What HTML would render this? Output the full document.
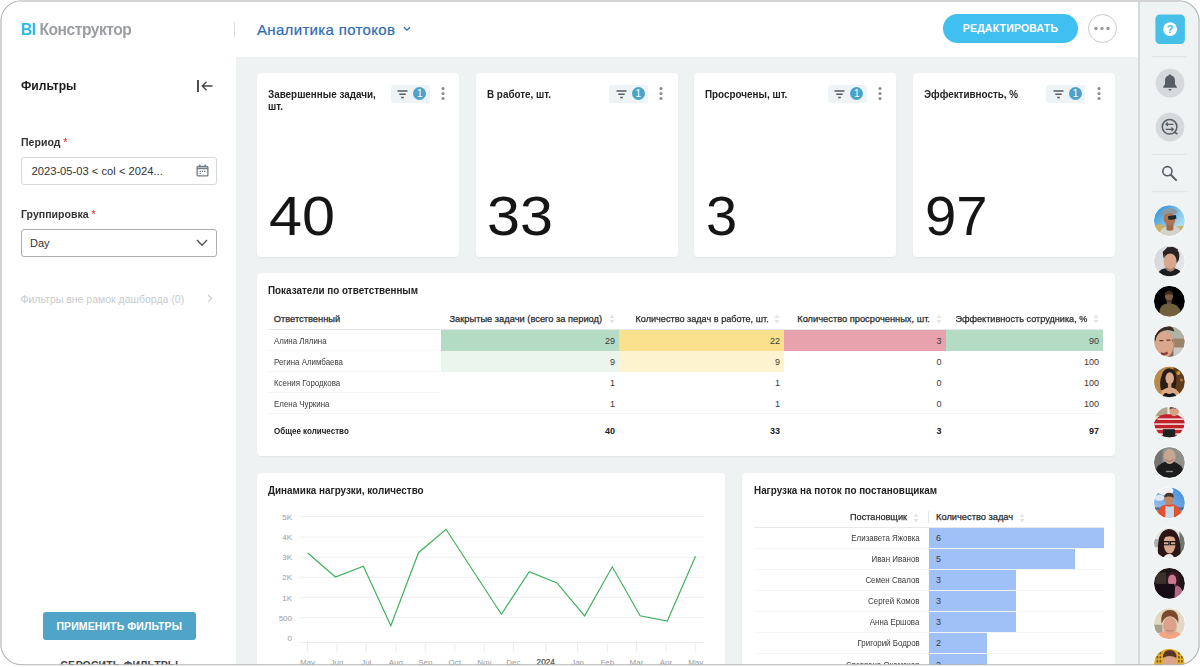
<!DOCTYPE html>
<html lang="ru">
<head>
<meta charset="utf-8">
<title>BI Конструктор — Аналитика потоков</title>
<style>
*{box-sizing:border-box;margin:0;padding:0}
html,body{width:1200px;height:667px;overflow:hidden;background:#fff}
body{font-family:"Liberation Sans",sans-serif;color:#222;position:relative}
.abs{position:absolute}
#frame{position:absolute;left:0;top:0;width:1200px;height:665.3px;border-radius:21px;overflow:hidden;background:#fff}
#frameborder{position:absolute;left:0;top:0;pointer-events:none;z-index:50}
#content{position:absolute;left:236px;top:57px;width:904px;height:620px;background:#eff2f3}
#rside{position:absolute;left:1138px;top:0;width:62px;height:667px;background:#f0f3f4;border-left:2px solid #d3dae0}
.card{position:absolute;background:#fff;border-radius:4px;box-shadow:0 1px 2px rgba(0,0,0,.06)}
.ct{position:absolute;left:11px;top:15px;font-size:10.5px;transform:scaleX(.94);transform-origin:0 0;line-height:12px;font-weight:bold;color:#222;white-space:nowrap}
.big{position:absolute;left:11.8px;font-size:56px;line-height:56px;color:#151515;transform:scaleX(1.06);transform-origin:0 0}
.chip{position:absolute;left:133.5px;top:11.5px;width:39px;height:18px;border-radius:3px;background:#eef3f6}
.dots3{position:absolute;top:14px;width:4px}
.lbl{position:absolute;left:20.5px;transform:scaleX(.96);transform-origin:0 0;font-size:11px;font-weight:bold;color:#333;white-space:nowrap}
.lbl i{color:#e02020;font-style:normal;font-weight:normal}
.ttl{position:absolute;font-size:10.5px;line-height:14px;font-weight:bold;color:#222;white-space:nowrap;transform:scaleX(.94);transform-origin:0 0}
.th{position:absolute;font-size:9.3px;line-height:13px;color:#2a2a2a;white-space:nowrap;-webkit-text-stroke:.25px #2a2a2a}
.td{position:absolute;font-size:9px;line-height:21px;color:#3a3a3a;white-space:nowrap}
.td.b{font-weight:bold;color:#222}
.r{text-align:right}
.th.r{transform:scaleX(.982);transform-origin:100% 0}
.td.n{transform:scaleX(.88);transform-origin:0 0}
.td.n2{transform:scaleX(.89);transform-origin:0 0}
.td.n3{transform:scaleX(.88);transform-origin:100% 0}
</style>
</head>
<body>
<div id="frame">

<!-- header -->
<div class="abs" style="left:21px;top:19px;font-size:16.2px;line-height:20px;font-weight:bold;letter-spacing:-0.5px;transform:scaleX(.965);transform-origin:0 0;white-space:nowrap;color:#9a9da1"><span style="color:#2db7ea">BI</span> Конструктор</div>
<div class="abs" style="left:234px;top:22px;width:1px;height:15px;background:#dcdfe1"></div>
<div class="abs" style="left:257px;top:20px;font-size:15px;letter-spacing:.33px;line-height:20px;color:#2a6bb3;white-space:nowrap;-webkit-text-stroke:.2px #2a6bb3">Аналитика потоков</div>
<svg class="abs" style="left:403px;top:26px" width="8" height="6" viewBox="0 0 8 6"><path d="M1 1.2 L4 4.2 L7 1.2" fill="none" stroke="#2a6bb3" stroke-width="1.3"/></svg>

<div class="abs" style="left:943px;top:14px;width:135px;height:29px;border-radius:15px;background:#3fc0f0;color:#fff;font-size:10.5px;font-weight:bold;line-height:29px;text-align:center;letter-spacing:.2px">РЕДАКТИРОВАТЬ</div>
<div class="abs" style="left:1087.5px;top:14.3px;width:29px;height:29px;border-radius:50%;border:1px solid #c9c9c9;background:#fff"></div>
<svg class="abs" style="left:1093px;top:26.3px" width="18" height="5" viewBox="0 0 18 5"><circle cx="3" cy="2.5" r="1.7" fill="#9a9a9a"/><circle cx="9" cy="2.5" r="1.7" fill="#9a9a9a"/><circle cx="15" cy="2.5" r="1.7" fill="#9a9a9a"/></svg>

<!-- left sidebar -->
<div class="abs" style="left:20.5px;top:77px;font-size:13px;line-height:18px;font-weight:bold;color:#1c1c1c;transform:scaleX(.93);transform-origin:0 0">Фильтры</div>
<svg class="abs" style="left:196px;top:79px" width="18" height="14" viewBox="0 0 18 14"><path d="M2 1 V13" stroke="#444" stroke-width="1.9" fill="none"/><path d="M16.5 7 H6.5 M10.5 2.8 L6.3 7 L10.5 11.2" stroke="#444" stroke-width="1.4" fill="none"/></svg>

<div class="lbl" style="top:136px;line-height:13px">Период <i>*</i></div>
<div class="abs" style="left:20.5px;top:157px;width:196px;height:27.5px;border:1px solid #d6d9db;border-radius:3px;background:#fff"></div>
<div class="abs" style="left:31.5px;top:164px;font-size:11.2px;line-height:14px;color:#333;white-space:nowrap">2023-05-03 &lt; col &lt; 2024...</div>
<svg class="abs" style="left:196px;top:164px" width="13" height="13" viewBox="0 0 13 13"><rect x="1.100" y="2.300" width="10.800" height="9.600" rx="1" fill="none" stroke="#727c85" stroke-width="1.300"/><path d="M1 4.300 H12" stroke="#727c85" stroke-width="1.800"/><path d="M3.800 0.600 V3 M9.200 0.600 V3" stroke="#727c85" stroke-width="1.300"/><path d="M3.600 7.300 H5 M5.900 7.300 H7.100 M8 7.300 H9.400 M3.600 9.500 H5" stroke="#727c85" stroke-width="1.200"/></svg>

<div class="lbl" style="top:208px;line-height:13px">Группировка <i>*</i></div>
<div class="abs" style="left:20.5px;top:228.8px;width:196px;height:28px;border:1px solid #aaaeb1;border-radius:3px;background:#fff"></div>
<div class="abs" style="left:30px;top:236px;font-size:11px;line-height:14px;color:#333">Day</div>
<svg class="abs" style="left:196px;top:239.300px" width="12" height="8" viewBox="0 0 12 8"><path d="M1 1 L6 6.2 L11 1" fill="none" stroke="#555" stroke-width="1.4"/></svg>

<div class="abs" style="left:20.5px;top:291.5px;font-size:10.5px;line-height:14px;color:#c7cccf;white-space:nowrap">Фильтры вне рамок дашборда (0)</div>
<svg class="abs" style="left:207px;top:294px" width="6" height="9" viewBox="0 0 6 9"><path d="M1 1 L4.6 4.5 L1 8" fill="none" stroke="#c7cccf" stroke-width="1.1"/></svg>

<div class="abs" style="left:42.5px;top:612px;width:153.5px;height:28px;border-radius:3px;background:#50a4c8;color:#fff;font-size:10.5px;font-weight:bold;line-height:28px;text-align:center;letter-spacing:.1px;white-space:nowrap">ПРИМЕНИТЬ ФИЛЬТРЫ</div>
<div class="abs" style="left:42.5px;top:655px;width:153.5px;font-size:10.5px;font-weight:bold;line-height:20px;text-align:center;color:#444;letter-spacing:.1px;white-space:nowrap">СБРОСИТЬ ФИЛЬТРЫ</div>

<!-- content -->
<div id="content"></div>

<!--CARDS-->
<div class="card" style="left:257.0px;top:73px;width:202px;height:183.5px">
<div class="ct">Завершенные задачи,<br>шт.</div>
<div class="chip"><svg class="abs" style="left:6.500px;top:5px" width="11" height="9" viewBox="0 0 11 9"><path d="M0.5 1 H10.5 M2.3 4.2 H8.7 M4.2 7.4 H6.8" stroke="#555b60" stroke-width="1.5" fill="none"/></svg><div class="abs" style="left:22.6px;top:2.4px;width:13.2px;height:13.2px;border-radius:50%;background:#4ba3c8;color:#fff;font-size:10px;line-height:13.5px;text-align:center">1</div></div>
<svg class="dots3" style="left:183.900px" width="4" height="13" viewBox="0 0 4 13"><circle cx="2" cy="1.6" r="1.5" fill="#8a8a8a"/><circle cx="2" cy="6.5" r="1.5" fill="#8a8a8a"/><circle cx="2" cy="11.4" r="1.5" fill="#8a8a8a"/></svg>
<div class="big" style="top:115px;transform:scaleX(1.06)">40</div>
</div>
<div class="card" style="left:475.6px;top:73px;width:202px;height:183.5px">
<div class="ct">В работе, шт.</div>
<div class="chip"><svg class="abs" style="left:6.500px;top:5px" width="11" height="9" viewBox="0 0 11 9"><path d="M0.5 1 H10.5 M2.3 4.2 H8.7 M4.2 7.4 H6.8" stroke="#555b60" stroke-width="1.5" fill="none"/></svg><div class="abs" style="left:22.6px;top:2.4px;width:13.2px;height:13.2px;border-radius:50%;background:#4ba3c8;color:#fff;font-size:10px;line-height:13.5px;text-align:center">1</div></div>
<svg class="dots3" style="left:183.900px" width="4" height="13" viewBox="0 0 4 13"><circle cx="2" cy="1.6" r="1.5" fill="#8a8a8a"/><circle cx="2" cy="6.5" r="1.5" fill="#8a8a8a"/><circle cx="2" cy="11.4" r="1.5" fill="#8a8a8a"/></svg>
<div class="big" style="top:115px;transform:scaleX(1.06)">33</div>
</div>
<div class="card" style="left:694.2px;top:73px;width:202px;height:183.5px">
<div class="ct">Просрочены, шт.</div>
<div class="chip"><svg class="abs" style="left:6.500px;top:5px" width="11" height="9" viewBox="0 0 11 9"><path d="M0.5 1 H10.5 M2.3 4.2 H8.7 M4.2 7.4 H6.8" stroke="#555b60" stroke-width="1.5" fill="none"/></svg><div class="abs" style="left:22.6px;top:2.4px;width:13.2px;height:13.2px;border-radius:50%;background:#4ba3c8;color:#fff;font-size:10px;line-height:13.5px;text-align:center">1</div></div>
<svg class="dots3" style="left:183.900px" width="4" height="13" viewBox="0 0 4 13"><circle cx="2" cy="1.6" r="1.5" fill="#8a8a8a"/><circle cx="2" cy="6.5" r="1.5" fill="#8a8a8a"/><circle cx="2" cy="11.4" r="1.5" fill="#8a8a8a"/></svg>
<div class="big" style="top:115px;transform:scaleX(1.0)">3</div>
</div>
<div class="card" style="left:912.8px;top:73px;width:202px;height:183.5px">
<div class="ct">Эффективность, %</div>
<div class="chip"><svg class="abs" style="left:6.500px;top:5px" width="11" height="9" viewBox="0 0 11 9"><path d="M0.5 1 H10.5 M2.3 4.2 H8.7 M4.2 7.4 H6.8" stroke="#555b60" stroke-width="1.5" fill="none"/></svg><div class="abs" style="left:22.6px;top:2.4px;width:13.2px;height:13.2px;border-radius:50%;background:#4ba3c8;color:#fff;font-size:10px;line-height:13.5px;text-align:center">1</div></div>
<svg class="dots3" style="left:183.900px" width="4" height="13" viewBox="0 0 4 13"><circle cx="2" cy="1.6" r="1.5" fill="#8a8a8a"/><circle cx="2" cy="6.5" r="1.5" fill="#8a8a8a"/><circle cx="2" cy="11.4" r="1.5" fill="#8a8a8a"/></svg>
<div class="big" style="top:115px;transform:scaleX(1.005)">97</div>
</div>
<!--/CARDS-->
<!--TABLE-->
<div class="card" style="left:257px;top:273px;width:858px;height:183px">
<div class="ttl" style="left:11.25px;top:10px">Показатели по ответственным</div>
<div class="th" style="left:16.75px;top:39.80000000000001px">Ответственный</div>
<div class="th r" style="right:512.95px;top:39.80000000000001px;transform:scaleX(1.0)">Закрытые задачи (всего за период)</div>
<svg class="abs" style="left:352.25px;top:41px" width="6" height="10" viewBox="0 0 6 10"><path d="M3 0.5 L5.6 4 H0.4 Z M3 9.5 L5.6 6 H0.4 Z" fill="#e4e4e4"/></svg>
<div class="th r" style="right:346.55px;top:39.80000000000001px;transform:scaleX(0.982)">Количество задач в работе, шт.</div>
<svg class="abs" style="left:517.25px;top:41px" width="6" height="10" viewBox="0 0 6 10"><path d="M3 0.5 L5.6 4 H0.4 Z M3 9.5 L5.6 6 H0.4 Z" fill="#e4e4e4"/></svg>
<div class="th r" style="right:185.05px;top:39.80000000000001px;transform:scaleX(1.0)">Количество просроченных, шт.</div>
<svg class="abs" style="left:678.75px;top:41px" width="6" height="10" viewBox="0 0 6 10"><path d="M3 0.5 L5.6 4 H0.4 Z M3 9.5 L5.6 6 H0.4 Z" fill="#e4e4e4"/></svg>
<div class="th r" style="right:27.55px;top:39.80000000000001px;transform:scaleX(0.982)">Эффективность сотрудника, %</div>
<svg class="abs" style="left:836.25px;top:41px" width="6" height="10" viewBox="0 0 6 10"><path d="M3 0.5 L5.6 4 H0.4 Z M3 9.5 L5.6 6 H0.4 Z" fill="#e4e4e4"/></svg>
<div class="abs" style="left:11px;top:56px;width:835.25px;height:1px;background:#e6e8ea"></div>
<div class="abs" style="left:183.5px;top:56.5px;width:178.75px;height:21px;background:#b4dcc5"></div>
<div class="abs" style="left:362.25px;top:56.5px;width:165.0px;height:21px;background:#f8e08c"></div>
<div class="abs" style="left:527.25px;top:56.5px;width:161.5px;height:21px;background:#e8a2ad"></div>
<div class="abs" style="left:688.75px;top:56.5px;width:157.5px;height:21px;background:#b4dcc5"></div>
<div class="td n" style="left:16.75px;top:57.9px">Алина Лялина</div>
<div class="td r" style="right:500.0px;top:57.8px">29</div>
<div class="td r" style="right:335.0px;top:57.8px">22</div>
<div class="td r" style="right:173.5px;top:57.8px">3</div>
<div class="td r" style="right:16.0px;top:57.8px">90</div>
<div class="abs" style="left:183.5px;top:77.5px;width:178.75px;height:21px;background:#ebf5ee"></div>
<div class="abs" style="left:362.25px;top:77.5px;width:165.0px;height:21px;background:#fdf3cf"></div>
<div class="abs" style="left:11px;top:77.0px;width:172.5px;height:1px;background:#f5f6f7"></div>
<div class="td n" style="left:16.75px;top:78.9px">Регина Алимбаева</div>
<div class="td r" style="right:500.0px;top:78.8px">9</div>
<div class="td r" style="right:335.0px;top:78.8px">9</div>
<div class="td r" style="right:173.5px;top:78.8px">0</div>
<div class="td r" style="right:16.0px;top:78.8px">100</div>
<div class="abs" style="left:11px;top:98.0px;width:172.5px;height:1px;background:#f5f6f7"></div>
<div class="td n" style="left:16.75px;top:99.9px">Ксения Городкова</div>
<div class="td r" style="right:500.0px;top:99.8px">1</div>
<div class="td r" style="right:335.0px;top:99.8px">1</div>
<div class="td r" style="right:173.5px;top:99.8px">0</div>
<div class="td r" style="right:16.0px;top:99.8px">100</div>
<div class="abs" style="left:11px;top:119.0px;width:172.5px;height:1px;background:#f5f6f7"></div>
<div class="td n" style="left:16.75px;top:120.9px">Елена Чуркина</div>
<div class="td r" style="right:500.0px;top:120.8px">1</div>
<div class="td r" style="right:335.0px;top:120.8px">1</div>
<div class="td r" style="right:173.5px;top:120.8px">0</div>
<div class="td r" style="right:16.0px;top:120.8px">100</div>
<div class="abs" style="left:11px;top:140.25px;width:835.25px;height:1px;background:#f4f5f6"></div>
<div class="td b n2" style="left:16.75px;top:148px">Общее количество</div>
<div class="td b r" style="right:500.0px;top:148px">40</div>
<div class="td b r" style="right:335.0px;top:148px">33</div>
<div class="td b r" style="right:173.5px;top:148px">3</div>
<div class="td b r" style="right:16.0px;top:148px">97</div>
</div>
<!--/TABLE-->
<!--CHART-->
<div class="card" style="left:257px;top:473px;width:468px;height:200px">
<div class="ttl" style="left:11px;top:9.600000000000023px">Динамика нагрузки, количество</div>
<svg class="abs" style="left:0;top:0" width="468" height="200" viewBox="257 473 468 200" font-family="Liberation Sans, sans-serif">
<path d="M300 516.6 H704" stroke="#efefef" stroke-width="1"/>
<path d="M300 537.1 H704" stroke="#efefef" stroke-width="1"/>
<path d="M300 557.2 H704" stroke="#efefef" stroke-width="1"/>
<path d="M300 577.3 H704" stroke="#efefef" stroke-width="1"/>
<path d="M300 597.3 H704" stroke="#efefef" stroke-width="1"/>
<path d="M300 617.7 H704" stroke="#efefef" stroke-width="1"/>
<path d="M300 642.5 H704" stroke="#e9e9e9" stroke-width="1"/>
<text x="292" y="519.9" text-anchor="end" font-size="8" fill="#9b9b9b">5K</text>
<text x="292" y="540.1" text-anchor="end" font-size="8" fill="#9b9b9b">4K</text>
<text x="292" y="560.3" text-anchor="end" font-size="8" fill="#9b9b9b">3K</text>
<text x="292" y="580.4" text-anchor="end" font-size="8" fill="#9b9b9b">2K</text>
<text x="292" y="600.6999999999999" text-anchor="end" font-size="8" fill="#9b9b9b">1K</text>
<text x="292" y="621.1" text-anchor="end" font-size="8" fill="#9b9b9b">500</text>
<text x="292" y="640.9" text-anchor="end" font-size="8" fill="#9b9b9b">0</text>
<path d="M307.5 643.5 V652" stroke="#ebebeb" stroke-width="1"/>
<text x="307.5" y="665" text-anchor="middle" font-size="8" fill="#9b9b9b">May</text>
<path d="M337 643.5 V652" stroke="#ebebeb" stroke-width="1"/>
<text x="337" y="665" text-anchor="middle" font-size="8" fill="#9b9b9b">Jun</text>
<path d="M366.3 643.5 V652" stroke="#ebebeb" stroke-width="1"/>
<text x="366.3" y="665" text-anchor="middle" font-size="8" fill="#9b9b9b">Jul</text>
<path d="M395.8 643.5 V652" stroke="#ebebeb" stroke-width="1"/>
<text x="395.8" y="665" text-anchor="middle" font-size="8" fill="#9b9b9b">Aug</text>
<path d="M425.3 643.5 V652" stroke="#ebebeb" stroke-width="1"/>
<text x="425.3" y="665" text-anchor="middle" font-size="8" fill="#9b9b9b">Sep</text>
<path d="M454.8 643.5 V652" stroke="#ebebeb" stroke-width="1"/>
<text x="454.8" y="665" text-anchor="middle" font-size="8" fill="#9b9b9b">Oct</text>
<path d="M484.3 643.5 V652" stroke="#ebebeb" stroke-width="1"/>
<text x="484.3" y="665" text-anchor="middle" font-size="8" fill="#9b9b9b">Nov</text>
<path d="M513.4 643.5 V652" stroke="#ebebeb" stroke-width="1"/>
<text x="513.4" y="665" text-anchor="middle" font-size="8" fill="#9b9b9b">Dec</text>
<path d="M545.7 643.5 V652" stroke="#ebebeb" stroke-width="1"/>
<text x="545.7" y="665" text-anchor="middle" font-size="8.2" fill="#555" stroke="#555" stroke-width=".25">2024</text>
<path d="M577.6 643.5 V652" stroke="#ebebeb" stroke-width="1"/>
<text x="577.6" y="665" text-anchor="middle" font-size="8" fill="#9b9b9b">Jan</text>
<path d="M607.3 643.5 V652" stroke="#ebebeb" stroke-width="1"/>
<text x="607.3" y="665" text-anchor="middle" font-size="8" fill="#9b9b9b">Feb</text>
<path d="M636.5 643.5 V652" stroke="#ebebeb" stroke-width="1"/>
<text x="636.5" y="665" text-anchor="middle" font-size="8" fill="#9b9b9b">Mar</text>
<path d="M666 643.5 V652" stroke="#ebebeb" stroke-width="1"/>
<text x="666" y="665" text-anchor="middle" font-size="8" fill="#9b9b9b">Apr</text>
<path d="M695.7 643.5 V652" stroke="#ebebeb" stroke-width="1"/>
<text x="695.7" y="665" text-anchor="middle" font-size="8" fill="#9b9b9b">May</text>
<polyline fill="none" stroke="#3daf5c" stroke-width="1.15" stroke-linejoin="miter" points="307.7,553 335.4,577 363.4,566.3 390.8,625.8 418.5,552.7 446,529.3 501.4,614.2 529.3,571.8 557,583 584.6,615.9 612.3,566.8 640.1,615.8 667.3,621.1 695.5,556.3"/>
</svg></div>
<!--/CHART-->
<!--BARS-->
<div class="card" style="left:742px;top:473px;width:373px;height:200px">
<div class="ttl" style="left:11.600000000000023px;top:9.5px">Нагрузка на поток по постановщикам</div>
<div class="th r" style="right:207.8px;top:37.5px">Постановщик</div>
<svg class="abs" style="left:171px;top:39.5px" width="6" height="10" viewBox="0 0 6 10"><path d="M3 0.5 L5.6 4 H0.4 Z M3 9.5 L5.6 6 H0.4 Z" fill="#e4e4e4"/></svg>
<div class="abs" style="left:186.2px;top:38px;width:1px;height:12px;background:#e6e6e6"></div>
<div class="th" style="left:194px;top:37.5px">Количество задач</div>
<svg class="abs" style="left:277px;top:39.5px" width="6" height="10" viewBox="0 0 6 10"><path d="M3 0.5 L5.6 4 H0.4 Z M3 9.5 L5.6 6 H0.4 Z" fill="#e4e4e4"/></svg>
<div class="abs" style="left:11.6px;top:53.5px;width:350.4px;height:1px;background:#e6e8ea"></div>
<div class="abs" style="left:186.6px;top:54.699999999999996px;width:175.8px;height:20.2px;background:#9fc1f8"></div>
<div class="td r n3" style="right:195.6px;top:54.9px">Елизавета Яжовка</div>
<div class="td" style="left:194px;top:54.9px">6</div>
<div class="abs" style="left:11.6px;top:74.80000000000001px;width:350.4px;height:1px;background:#f4f5f6"></div>
<div class="abs" style="left:186.6px;top:75.80000000000001px;width:146.5px;height:20.2px;background:#9fc1f8"></div>
<div class="td r n3" style="right:195.6px;top:76.0px">Иван Иванов</div>
<div class="td" style="left:194px;top:76.0px">5</div>
<div class="abs" style="left:11.6px;top:95.9px;width:350.4px;height:1px;background:#f4f5f6"></div>
<div class="abs" style="left:186.6px;top:96.9px;width:87.9px;height:20.2px;background:#9fc1f8"></div>
<div class="td r n3" style="right:195.6px;top:97.1px">Семен Свалов</div>
<div class="td" style="left:194px;top:97.1px">3</div>
<div class="abs" style="left:11.6px;top:117.0px;width:350.4px;height:1px;background:#f4f5f6"></div>
<div class="abs" style="left:186.6px;top:118.0px;width:87.9px;height:20.2px;background:#9fc1f8"></div>
<div class="td r n3" style="right:195.6px;top:118.19999999999999px">Сергей Комов</div>
<div class="td" style="left:194px;top:118.19999999999999px">3</div>
<div class="abs" style="left:11.6px;top:138.1px;width:350.4px;height:1px;background:#f4f5f6"></div>
<div class="abs" style="left:186.6px;top:139.1px;width:87.9px;height:20.2px;background:#9fc1f8"></div>
<div class="td r n3" style="right:195.6px;top:139.29999999999998px">Анна Ершова</div>
<div class="td" style="left:194px;top:139.29999999999998px">3</div>
<div class="abs" style="left:11.6px;top:159.20000000000002px;width:350.4px;height:1px;background:#f4f5f6"></div>
<div class="abs" style="left:186.6px;top:160.20000000000002px;width:58.6px;height:20.2px;background:#9fc1f8"></div>
<div class="td r n3" style="right:195.6px;top:160.4px">Григорий Бодров</div>
<div class="td" style="left:194px;top:160.4px">2</div>
<div class="abs" style="left:11.6px;top:180.3px;width:350.4px;height:1px;background:#f4f5f6"></div>
<div class="abs" style="left:186.6px;top:181.3px;width:58.6px;height:20.2px;background:#9fc1f8"></div>
<div class="td r n3" style="right:195.6px;top:181.5px">Светлана Окамская</div>
<div class="td" style="left:194px;top:181.5px">2</div>
</div>
<!--/BARS-->

<!-- right sidebar -->
<div id="rside"></div>
<!--RSIDE-->
<svg class="abs" style="left:1140px;top:0" width="60" height="667" viewBox="1140 0 60 667">
<rect x="1155.4" y="14.4" width="29.5" height="29.6" rx="4.5" fill="#46bfe9"/>
<circle cx="1170.1" cy="29.2" r="6.9" fill="#fff"/>
<text x="1170.1" y="33.3" text-anchor="middle" font-family="Liberation Sans, sans-serif" font-weight="bold" font-size="11.5" fill="#46bfe9">?</text>
<path d="M1152 56.7 H1187" stroke="#dfe3e5" stroke-width="1"/>
<path d="M1152 154.4 H1187" stroke="#dfe3e5" stroke-width="1"/>
<path d="M1152 191.7 H1187" stroke="#dfe3e5" stroke-width="1"/>
<circle cx="1170" cy="83.1" r="14.4" fill="#d5d9dc"/>
<path d="M1170 75.2 c-3.1 0 -5 2.3 -5 5.4 v3.6 l-1.8 2.6 v0.9 h13.6 v-0.9 l-1.8 -2.6 v-3.6 c0 -3.1 -1.9 -5.4 -5 -5.4 z" fill="#555d65"/><path d="M1168.2 89 h3.6 l-1.8 1.9 z" fill="#555d65"/><circle cx="1170" cy="75.3" r="1" fill="#555d65"/>
<circle cx="1170" cy="127.1" r="14.4" fill="#d5d9dc"/>
<circle cx="1169.6" cy="126.8" r="7.3" fill="none" stroke="#555d65" stroke-width="1.5"/><path d="M1174.3 132 l3.2 2.2" stroke="#555d65" stroke-width="1.6" fill="none"/>
<path d="M1166 124.3 h7.4 M1167.8 122.5 l-1.9 1.8 l1.9 1.8 M1173.2 129.3 h-7.4 M1171.4 127.5 l1.9 1.8 l-1.9 1.8" stroke="#555d65" stroke-width="1.2" fill="none"/>
<circle cx="1167.4" cy="171.2" r="4.6" fill="none" stroke="#555d65" stroke-width="1.6"/><path d="M1170.8 174.7 l5.3 5.4" stroke="#555d65" stroke-width="2" stroke-linecap="round"/>
<defs><clipPath id="av0"><circle cx="1169.4" cy="220.7" r="15.6"/></clipPath><clipPath id="av1"><circle cx="1169.4" cy="261.0" r="15.6"/></clipPath><clipPath id="av2"><circle cx="1169.4" cy="301.3" r="15.6"/></clipPath><clipPath id="av3"><circle cx="1169.4" cy="341.6" r="15.6"/></clipPath><clipPath id="av4"><circle cx="1169.4" cy="381.9" r="15.6"/></clipPath><clipPath id="av5"><circle cx="1169.4" cy="422.2" r="15.6"/></clipPath><clipPath id="av6"><circle cx="1169.4" cy="462.5" r="15.6"/></clipPath><clipPath id="av7"><circle cx="1169.4" cy="502.8" r="15.6"/></clipPath><clipPath id="av8"><circle cx="1169.4" cy="543.1" r="15.6"/></clipPath><clipPath id="av9"><circle cx="1169.4" cy="583.4" r="15.6"/></clipPath><clipPath id="av10"><circle cx="1169.4" cy="623.7" r="15.6"/></clipPath><clipPath id="av11"><circle cx="1169.4" cy="664.0" r="15.6"/></clipPath>
<linearGradient id="sky1" x1="0" y1="0" x2="1" y2="1"><stop offset="0" stop-color="#1f8ad4"/><stop offset="0.700" stop-color="#a5d8f1"/><stop offset="1" stop-color="#cfe9f5"/></linearGradient>
<linearGradient id="sky8" x1="1" y1="0" x2="0" y2="1"><stop offset="0" stop-color="#3f88dc"/><stop offset="1" stop-color="#a9cdef"/></linearGradient>
<filter id="bl" x="-10%" y="-10%" width="120%" height="120%"><feGaussianBlur stdDeviation="0.45"/></filter>
</defs>
<g clip-path="url(#av0)"><g transform="translate(1169.4 220.7)" filter="url(#bl)"><rect x="-16" y="-16" width="32" height="32" fill="url(#sky1)"/><path d="M-16 5 l7 -2 l5 3 v10 h-12z" fill="#c6b06c"/><path d="M5 6 l9 -1 l2 2 v9 h-11z" fill="#c9b470"/><path d="M-10 16 q0 -9 7 -10 l8 -1 q7 2 8 11z" fill="#d3d3cc"/><path d="M-3 2 h7 v7 q-4 2 -7 0z" fill="#a06a4a"/><ellipse cx="0.5" cy="-1.500" rx="5.800" ry="6.800" fill="#ad7552" transform="rotate(-15)"/><path d="M-8.500 -4 q0 -7.500 8 -8.500 q7 -0.500 9 4.500 l-3.500 1.500 q-6 -3 -13.500 2.500z" fill="#8e98a1"/><path d="M-1.500 -4.500 l8 -1.200 l0.500 3.500 q-4 2 -8 1z" fill="#1d2733"/></g></g>
<g clip-path="url(#av1)"><g transform="translate(1169.4 261.0)" filter="url(#bl)"><rect x="-16" y="-16" width="32" height="32" fill="#d9dadf"/><rect x="6" y="-16" width="10" height="32" fill="#e3e4e8"/><path d="M-12 16 q0 -7 7 -8.500 l9 -0.500 q8 1 9 9z" fill="#1b1b1e"/><path d="M-3 2 h8 v7 q-4 2 -8 0z" fill="#c4927a"/><ellipse cx="2.400" cy="-5" rx="7.600" ry="9.300" fill="#2a2422"/><ellipse cx="0.800" cy="0.800" rx="6.500" ry="8.400" fill="#d8a68d"/><path d="M-3.500 5.500 q4.500 5 9 0 q-1 5 -4.500 5.200 q-3.500 0 -4.500 -5.200z" fill="#a67c6a"/><path d="M-5.700 -2 q0 -6 4 -7 q6 -1 9 3 l1 -6 l-10 -2 l-5 5z" fill="#2a2422"/></g></g>
<g clip-path="url(#av2)"><g transform="translate(1169.4 301.3)" filter="url(#bl)"><rect x="-16" y="-16" width="32" height="32" fill="#060606"/><path d="M-10 16 q-1 -11 5 -13 l4.500 -1 l5 1 q7 2 7.500 13z" fill="#6f603b"/><path d="M-2.500 -2 h4.500 v5 h-4.500z" fill="#6d5140"/><ellipse cx="-0.400" cy="-5" rx="4" ry="5.400" fill="#7d5f4a"/><path d="M-4.400 -6 q0 -4.600 4 -4.600 q4 0 4 4.600 q-4 -2 -8 0z" fill="#3e2b20"/><path d="M-3.500 -2.500 q3 3.500 6.200 0 q-0.500 3.500 -3.100 3.500 q-2.500 0 -3.100 -3.500z" fill="#4a3527"/></g></g>
<g clip-path="url(#av3)"><g transform="translate(1169.4 341.6)" filter="url(#bl)"><rect x="-16" y="-16" width="32" height="32" fill="#aeb3a5"/><rect x="2" y="-3" width="14" height="9" fill="#9a8468"/><rect x="3" y="6" width="13" height="10" fill="#c9c9c6"/><ellipse cx="-5" cy="2.500" rx="10" ry="12.800" fill="#dba78c"/><path d="M-16 -4 q1 -12 13 -12 q7 0 8 6 q-7 -3 -13 0 q-5 3 -6 10z" fill="#3b2a23"/><path d="M2 -2 q3 4 1 12 q-2 4 -5 6 h6 v-18z" fill="#8a6a58"/><path d="M-8.500 10.500 q3 2 6.500 -0.500 l0.500 2.500 q-3.500 2 -7 0.500z" fill="#8a3835"/><path d="M-10 -1 h4 M-3 -1.500 h4" stroke="#5a3a2e" stroke-width="1.200"/></g></g>
<g clip-path="url(#av4)"><g transform="translate(1169.4 381.9)" filter="url(#bl)"><rect x="-16" y="-16" width="32" height="32" fill="#b98a4a"/><rect x="4" y="-16" width="12" height="32" fill="#5e3d1f"/><circle cx="9" cy="-9" r="2" fill="#c9963c"/><circle cx="12" cy="-2" r="1.500" fill="#b07a2c"/><path d="M-8.500 8 q-2 -8 1 -15 q2 -7 8 -6.500 q6 0.500 6.500 9 q0 9 -2 13z" fill="#2c1c18"/><ellipse cx="0.300" cy="-3.600" rx="4.200" ry="6" fill="#dbab8c"/><path d="M-10 16 q1 -8 6 -9.500 l4 -1.500 l4 1 q6 2 7 10z" fill="#dba884"/><path d="M-1.500 1 h3.500 v5 h-3.500z" fill="#d19d7c"/><path d="M-6.500 16 q0 -5 3.500 -5 q3 2 6 0 q3.500 0 4 5z" fill="#141416"/></g></g>
<g clip-path="url(#av5)"><g transform="translate(1169.4 422.2)" filter="url(#bl)"><rect x="-16" y="-16" width="32" height="32" fill="#e9e7e2"/><rect x="-16" y="-16" width="14" height="10" fill="#b5a58f"/><path d="M-16 16 v-14 q3 -9 12 -10 l10 0 q8 2 10 10 v14z" fill="#bf202c"/><path d="M-12 -3 h26 M-15 2 h31 M-16 7 h32 M-16 12 h10 M6 12 h10" stroke="#ecc9c6" stroke-width="1.700"/><ellipse cx="4.800" cy="-11.500" rx="4.800" ry="5.500" fill="#d6a186"/><path d="M0 -13 q1 -4 5 -3.500 q5 0 4.500 4 q-5 -2.500 -9.500 -0.500z" fill="#4a3428"/><path d="M-6.500 7 h12 v8 h-12z" fill="#1f2023"/></g></g>
<g clip-path="url(#av6)"><g transform="translate(1169.4 462.5)" filter="url(#bl)"><rect x="-16" y="-16" width="32" height="32" fill="#8f8f8c"/><rect x="-16" y="-16" width="9" height="32" fill="#737371"/><path d="M-14 16 q-1 -12 6 -15 l4 -2 h8 l4 2 q7 3 6.500 15z" fill="#1a1a1c"/><ellipse cx="0.200" cy="-6" rx="6" ry="7.500" fill="#c8a791"/><path d="M-4 -3 q4 3.500 8 0" stroke="#9a6b5a" stroke-width="0.900" fill="none"/><path d="M-3.500 9 h7" stroke="#8a8a8c" stroke-width="1.400"/></g></g>
<g clip-path="url(#av7)"><g transform="translate(1169.4 502.8)" filter="url(#bl)"><rect x="-16" y="-16" width="32" height="32" fill="url(#sky8)"/><ellipse cx="-4" cy="-12" rx="8" ry="4.500" fill="#eef2f7"/><ellipse cx="-10" cy="-5" rx="5" ry="3" fill="#dfe8f2"/><rect x="-16" y="4.500" width="32" height="3" fill="#4f6f9f"/><rect x="-16" y="7.500" width="32" height="9" fill="#7f9dc0"/><path d="M-12 16 q-1 -11 6 -13.500 l5 -1.500 l6 1 q7 2 7.500 14z" fill="#e0522e"/><path d="M-4 16 v-13 q4 2 8.500 0 v13z" fill="#c7d9ea"/><ellipse cx="-0.400" cy="-3.600" rx="4.700" ry="5.800" fill="#c08a6a"/><path d="M-5.100 -5 q0 -5 4.700 -5 q5 0 4.700 5 q-5 -2.500 -9.400 0z" fill="#4e3426"/></g></g>
<g clip-path="url(#av8)"><g transform="translate(1169.4 543.1)" filter="url(#bl)"><rect x="-16" y="-16" width="32" height="32" fill="#e5e5e3"/><rect x="10" y="-16" width="6" height="32" fill="#6f766e"/><rect x="-16" y="-4" width="5" height="8" fill="#a9aeb0"/><path d="M-11 14 q-3 -27 10.500 -28 q13 0 11.500 28z" fill="#2a1815"/><ellipse cx="0.200" cy="0.500" rx="6" ry="10" fill="#d9a68e"/><path d="M-6 -1.500 h5.500 v3.200 h-5.500z M1 -1.500 h5.500 v3.200 h-5.500z" fill="none" stroke="#151517" stroke-width="1.100"/><path d="M-6.200 -5 q1 -6 6.500 -6 q6 0 6 6 q-6 -3.500 -12.500 0z" fill="#2a1815"/><path d="M-6 16 q1 -5 6 -5 q4 0 5 5z" fill="#ececec"/></g></g>
<g clip-path="url(#av9)"><g transform="translate(1169.4 583.4)" filter="url(#bl)"><rect x="-16" y="-16" width="32" height="32" fill="#1e1218"/><rect x="-14" y="-11" width="11" height="13" fill="#39312a"/><path d="M-2.500 -4 q0 -8 6 -8 q7 0 7 9 q0 6 -2 10 h-9z" fill="#3a1620"/><ellipse cx="2.800" cy="-2.800" rx="4.200" ry="6" fill="#c9788f"/><path d="M6 2 q8 0 8.500 14 h-10z" fill="#b06a85"/><path d="M-14 0.500 h19 v15.500 h-19z" fill="#190c12"/></g></g>
<g clip-path="url(#av10)"><g transform="translate(1169.4 623.7)" filter="url(#bl)"><rect x="-16" y="-16" width="32" height="32" fill="#e3d8c4"/><rect x="-16" y="1" width="9" height="8" fill="#a8a08a"/><path d="M-13 16 q1 -7 8 -8.500 h10 q8 1 9 8.500z" fill="#f2a584"/><ellipse cx="0.500" cy="2" rx="6.900" ry="9" fill="#dba28a"/><path d="M-7.800 0 q-2 -13 8 -13.600 q10 0 8.600 13.600 q-2 -7 -8 -7.500 q-6 0 -8.600 7.500z" fill="#7d4a2e"/><path d="M-3 6.500 q3.500 2 7 0" stroke="#b0705e" stroke-width="0.800" fill="none"/></g></g>
<g clip-path="url(#av11)"><g transform="translate(1169.4 664.0)" filter="url(#bl)"><rect x="-16" y="-16" width="32" height="32" fill="#e3ae2c"/><path d="M-12 -16 v32 M-9 -16 v32 M9.500 -16 v32 M12.500 -16 v32" stroke="#7a5a20" stroke-width="1.600" stroke-dasharray="2.500 1.500"/><ellipse cx="0.300" cy="-2" rx="6.800" ry="9" fill="#d8a58a"/><path d="M-6.500 -6 q0 -8 6.800 -8 q7 0 6.800 8 q-7 -4 -13.600 0z" fill="#5a3426"/></g></g>
<circle class="ring" cx="1169.4" cy="220.7" r="15.9" fill="none" stroke="#fbfbfb" stroke-width="0.9"/>
<circle class="ring" cx="1169.4" cy="261.0" r="15.9" fill="none" stroke="#fbfbfb" stroke-width="0.9"/>
<circle class="ring" cx="1169.4" cy="301.3" r="15.9" fill="none" stroke="#fbfbfb" stroke-width="0.9"/>
<circle class="ring" cx="1169.4" cy="341.6" r="15.9" fill="none" stroke="#fbfbfb" stroke-width="0.9"/>
<circle class="ring" cx="1169.4" cy="381.9" r="15.9" fill="none" stroke="#fbfbfb" stroke-width="0.9"/>
<circle class="ring" cx="1169.4" cy="422.2" r="15.9" fill="none" stroke="#fbfbfb" stroke-width="0.9"/>
<circle class="ring" cx="1169.4" cy="462.5" r="15.9" fill="none" stroke="#fbfbfb" stroke-width="0.9"/>
<circle class="ring" cx="1169.4" cy="502.8" r="15.9" fill="none" stroke="#fbfbfb" stroke-width="0.9"/>
<circle class="ring" cx="1169.4" cy="543.1" r="15.9" fill="none" stroke="#fbfbfb" stroke-width="0.9"/>
<circle class="ring" cx="1169.4" cy="583.4" r="15.9" fill="none" stroke="#fbfbfb" stroke-width="0.9"/>
<circle class="ring" cx="1169.4" cy="623.7" r="15.9" fill="none" stroke="#fbfbfb" stroke-width="0.9"/>
<circle class="ring" cx="1169.4" cy="664.0" r="15.9" fill="none" stroke="#fbfbfb" stroke-width="0.9"/>
</svg>
<!--/RSIDE-->

</div>
<svg id="frameborder" width="1200" height="667" viewBox="0 0 1200 667"><path d="M21.500 0.800 H1178.500 A20.700 20.700 0 0 1 1199.200 21.500 V644 A20.700 20.700 0 0 1 1178.500 664.800 H21.500 A20.700 20.700 0 0 1 0.800 644 V21.500 A20.700 20.700 0 0 1 21.500 0.800 Z" stroke="#b4b4b4" stroke-width="1.100" fill="none"/><path d="M21 1 H1179 M1 21 V644 M1199 21 V644" stroke="#d3d3d3" stroke-width="2" fill="none"/></svg>
</body>
</html>
